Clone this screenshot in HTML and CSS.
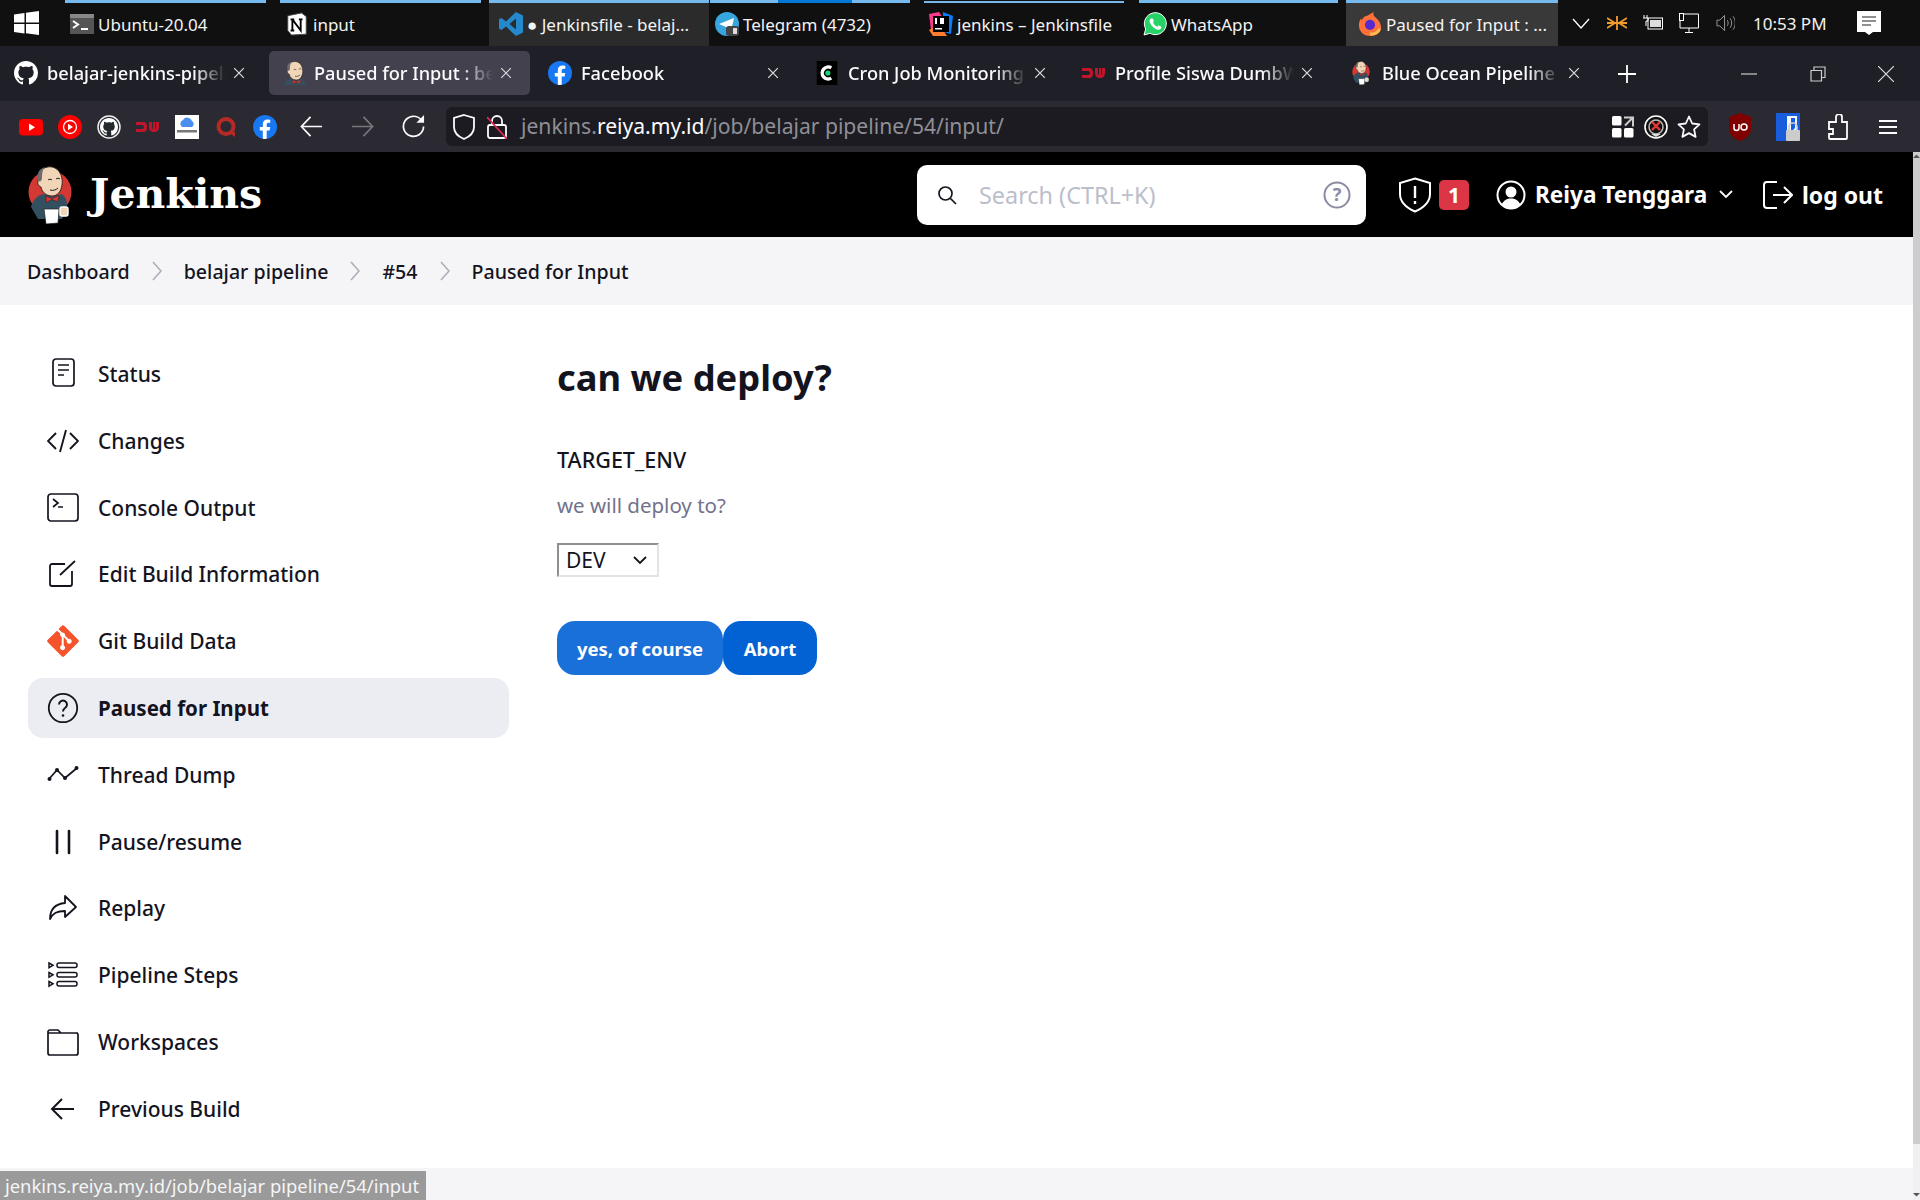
FILE: index.html
```html
<!DOCTYPE html>
<html lang="en">
<head>
<meta charset="utf-8">
<title>Paused for Input : belajar pipeline #54 [Jenkins]</title>
<link rel="stylesheet" href="styles.css">
</head>
<body>
<svg class="defs" width="0" height="0" aria-hidden="true">
  <defs>
    <g id="bfig">
      <path d="M3 41c2-8 7-12 13-13l8 3 9-3c4 2 6 6 6 11l-3 9-2 5H10z" fill="#335061"/>
      <path d="M12 6c2-4 9-7 15-4 6 3 8 11 7 17-1 7-5 11-10 11-6 0-10-4-11-9-2-1-4-3-3-6 0-2 1-2 2-1z" fill="#f0d6b7" stroke="#231f20" stroke-width=".9"/>
      <path d="M11 15C8 9 10 3 17 1c-3 3-3 8-3 12l-2 3z" fill="#6d6b6d"/>
      <path d="M20 14c1-1 3-1 4 0M28 13c1-1 3-1 4 0M22 24c3 1 6 0 8-2" fill="none" stroke="#231f20" stroke-width="1"/>
      <path d="M18 30l6 2.500 7-3-1 6.500-6-2.500-6 3z" fill="#d33833" stroke="#231f20" stroke-width=".5"/>
      <path d="M16 43h15l-1 14-12 1z" fill="#fff" stroke="#231f20" stroke-width=".7"/>
      <rect x="32" y="41" width="8" height="9" rx="2" fill="#f0d6b7" stroke="#fff" stroke-width="1.400"/>
    </g>
  </defs>
  <symbol id="butler" viewBox="0 0 44 58">
    <circle cx="22" cy="26" r="21.500" fill="#d33833"/>
    <use href="#bfig"/>
  </symbol>
  <symbol id="ghmark" viewBox="0 0 16 16">
    <path fill="currentColor" d="M8 0C3.58 0 0 3.58 0 8c0 3.54 2.29 6.53 5.47 7.59.4.07.55-.17.55-.38 0-.19-.01-.82-.01-1.49-2.01.37-2.53-.49-2.69-.94-.09-.23-.48-.94-.82-1.13-.28-.15-.68-.52-.01-.53.63-.01 1.08.58 1.23.82.72 1.21 1.87.87 2.33.66.07-.52.28-.87.51-1.07-1.78-.2-3.64-.89-3.64-3.95 0-.87.31-1.59.82-2.15-.08-.2-.36-1.02.08-2.12 0 0 .67-.21 2.2.82.64-.18 1.32-.27 2-.27s1.36.09 2 .27c1.53-1.04 2.2-.82 2.2-.82.44 1.1.16 1.92.08 2.12.51.56.82 1.27.82 2.15 0 3.07-1.87 3.75-3.65 3.95.29.25.54.73.54 1.48 0 1.07-.01 1.93-.01 2.2 0 .21.15.46.55.38A8 8 0 0 0 16 8c0-4.42-3.58-8-8-8z"/>
  </symbol>
  <symbol id="fb" viewBox="0 0 24 24">
    <circle cx="12" cy="12" r="12" fill="#1877f2"/>
    <path d="M16.600 15.400l.6-3.400h-3.500V9.700c0-1 .5-1.900 2-1.900h1.600V4.900s-1.400-.3-2.800-.3c-2.800 0-4.700 1.700-4.700 4.800V12H6.800v3.400h3v8.400a12 12 0 0 0 3.900 0v-8.400z" fill="#fff"/>
  </symbol>
  <symbol id="dw" viewBox="0 0 24 12">
    <path d="M0 1h7c3 0 4 2 4 5s-1 5-4 5H0V8h6c1 0 2-1 2-2s-1-2-2-2H0zM13 1h3v5c0 1 .5 2 1 2V1h2v7c.5 0 1-1 1-2V1h3v5c0 3-2 5-5 5s-5-2-5-5z" fill="#c0162c"/>
  </symbol>
  <symbol id="close" viewBox="0 0 16 16">
    <path d="M2.500 2.500l11 11M13.500 2.500l-11 11" stroke="currentColor" stroke-width="1.400" fill="none"/>
  </symbol>
  <symbol id="chev" viewBox="0 0 10 20">
    <path d="M1 1l8 9-8 9" fill="none" stroke="currentColor" stroke-width="1.600"/>
  </symbol>
</svg>

<div class="taskbar">
  <div class="start">
    <svg class="ic-win" viewBox="0 0 25 24"><path fill="#fff" d="M0 3.500l10.500-1.500v9.500H0zM12 1.800L25 0v11.500H12zM0 13h10.500v9.500L0 21zM12 13h13v11l-13-1.800z"/></svg>
  </div>
  <div class="task t-ubuntu">
    <svg class="ic-task" viewBox="0 0 24 20"><rect width="24" height="20" fill="#555"/><rect y="0" width="24" height="4" fill="#888"/><path d="M3 7l5 3.500-5 3.500" fill="none" stroke="#fff" stroke-width="2"/><path d="M11 15h7" stroke="#fff" stroke-width="2"/></svg>
    <span>Ubuntu-20.04</span>
  </div>
  <div class="task t-input">
    <svg class="ic-task" viewBox="0 0 24 26"><path d="M2 4l15-3 5 4v19l-16 1-4-5z" fill="#fff" stroke="#444"/><path d="M7 8v12M7 8l9 12V8M5 8h4M14 8h4M5 20h4" fill="none" stroke="#000" stroke-width="2"/></svg>
    <span>input</span>
  </div>
  <div class="task t-vs">
    <svg class="ic-task" viewBox="0 0 24 24"><path fill="#2489ca" d="M17 0l7 3.500v17L17 24 7 14.500 2.500 18 0 16.700V7.300L2.500 6 7 9.500zM17 6.500L10.500 12l6.500 5.500z"/></svg>
    <span>● Jenkinsfile - belaj...</span>
  </div>
  <div class="task t-tg">
    <svg class="ic-task" viewBox="0 0 24 24"><circle cx="12" cy="12" r="12" fill="#37a6de"/><path d="M4 12l15-6-3 13-5-4z" fill="#fff"/><rect x="11" y="14" width="13" height="10" rx="3" fill="#444"/><rect x="18" y="16" width="4" height="6" fill="#ddd"/></svg>
    <span>Telegram (4732)</span>
  </div>
  <div class="task t-ij">
    <svg class="ic-task" viewBox="0 0 24 24"><path d="M0 2l10-2 4 6-12 12z" fill="#fc3a8b"/><path d="M14 0l10 4-2 18-8-2z" fill="#087cfa"/><path d="M0 18l10-6 8 12H4z" fill="#fe7c2b"/><rect x="4" y="4" width="16" height="16" fill="#000"/><rect x="6" y="16" width="7" height="1.500" fill="#fff"/><rect x="6" y="6" width="2" height="6" fill="#fff"/><rect x="11" y="6" width="4" height="6" fill="#fff"/></svg>
    <span>jenkins – Jenkinsfile</span>
  </div>
  <div class="task t-wa">
    <svg class="ic-task" viewBox="0 0 24 24"><path d="M1 23l1.700-6A11 11 0 1 1 7 21.300z" fill="#25d366" stroke="#fff"/><path d="M8 6.500c-2 1-2 4 1 7.500s6.500 4.500 8.500 3c1-1 1-2 .5-2.500l-2.500-1.200-1.200 1.400c-2-.7-3.500-2.300-4.300-4.200L11 9 9.700 6.500z" fill="#fff"/></svg>
    <span>WhatsApp</span>
  </div>
  <div class="task t-ff">
    <svg class="ic-task" viewBox="0 0 24 26"><path d="M12 26C5 26 0 21 0 14c0-3 1-5 2-7l1 2c1-3 4-5 6-5l7-4c-1 3 0 4 2 6 4 3 6 7 6 11 0 5-5 9-12 9z" fill="#ff7139"/><path d="M22 18c0 4-5 6-10 6" fill="none" stroke="#ffbd4f" stroke-width="3"/><circle cx="12" cy="14" r="5.500" fill="#592acb"/></svg>
    <span>Paused for Input : ...</span>
  </div>
  <div class="tray">
    <svg class="tr-chev" viewBox="0 0 18 12"><path d="M1 1l8 9 8-9" fill="none" stroke="#fff" stroke-width="1.300"/></svg>
    <svg class="tr-net" viewBox="0 0 20 14"><path d="M0 2l8 5-8 5M20 2l-8 5 8 5M0 7h20M10 0v14" fill="none" stroke="#f39c2e" stroke-width="1.800"/></svg>
    <svg class="tr-bat" viewBox="0 0 20 16"><rect x="5" y="3" width="14.500" height="11" fill="none" stroke="#fff"/><rect x="7" y="5" width="11" height="7" fill="#ddd"/><path d="M1 0v3M4 0v3M0 3h5v3H3v5" stroke="#fff" fill="none"/></svg>
    <svg class="tr-mon" viewBox="0 0 20 20"><path d="M5 1h14.500v14H1V8M10 15v4M6 19.500h8" fill="none" stroke="#fff"/><rect x=".5" y=".5" width="4" height="7" fill="#101011" stroke="#fff"/></svg>
    <svg class="tr-vol" viewBox="0 0 20 18"><path d="M1 6h3l5-5v16l-5-5H1zM12 6c1 2 1 4 0 6M15 4c2 3 2 7 0 10M18 2c3 4 3 10 0 14" fill="none" stroke="#9a9a9a"/></svg>
    <span class="clock">10:53 PM</span>
    <svg class="tr-note" viewBox="0 0 24 24"><path d="M0 0h24v21h-8l-4 3-4-3H0z" fill="#fff"/><path d="M5 6h14M5 10h14M5 14h9" stroke="#222" stroke-width="1.200"/></svg>
  </div>
</div>

<div class="tabbar">
  <div class="tab">
    <svg class="ic-tab ic-gh"><use href="#ghmark"/></svg>
    <span class="tab-title">belajar-jenkins-pipeline</span>
    <svg class="ic-x"><use href="#close"/></svg>
  </div>
  <div class="tab tab-active">
    <svg class="ic-tab" viewBox="5 0 34 38"><use href="#bfig"/></svg>
    <span class="tab-title">Paused for Input : belajar</span>
    <svg class="ic-x"><use href="#close"/></svg>
  </div>
  <div class="tab">
    <svg class="ic-tab"><use href="#fb"/></svg>
    <span class="tab-title">Facebook</span>
    <svg class="ic-x"><use href="#close"/></svg>
  </div>
  <div class="tab">
    <svg class="ic-tab" viewBox="0 0 24 28"><rect width="24" height="28" fill="#000"/><path d="M17 8a7 7 0 1 0 0 12" fill="none" stroke="#fff" stroke-width="4"/><circle cx="13" cy="14" r="3" fill="#14d97a"/></svg>
    <span class="tab-title">Cron Job Monitoring</span>
    <svg class="ic-x"><use href="#close"/></svg>
  </div>
  <div class="tab">
    <svg class="ic-tab ic-dw"><use href="#dw"/></svg>
    <span class="tab-title">Profile Siswa DumbWays</span>
    <svg class="ic-x"><use href="#close"/></svg>
  </div>
  <div class="tab tab-ocean">
    <svg class="ic-tab ic-but"><use href="#butler"/></svg>
    <span class="tab-title">Blue Ocean Pipeline Editor</span>
    <svg class="ic-x"><use href="#close"/></svg>
  </div>
  <svg class="ic-plus" viewBox="0 0 18 18"><path d="M9 0v18M0 9h18" stroke="#fff" stroke-width="1.800"/></svg>
  <div class="winctl">
    <svg class="wc" viewBox="0 0 16 16"><path d="M0 8h16" stroke="#ccc" stroke-width="1.200"/></svg>
    <svg class="wc" viewBox="0 0 16 16"><path d="M1 4.500h10.500V15H1zM4 4.500V1h11v10.500h-3.500" fill="none" stroke="#ccc" stroke-width="1.200"/></svg>
    <svg class="wc" viewBox="0 0 16 16"><path d="M0 0l16 16M16 0L0 16" stroke="#ddd" stroke-width="1.200"/></svg>
  </div>
</div>

<div class="toolbar">
  <div class="bookmarks">
    <svg class="bm" viewBox="0 0 24 24"><rect y="4" width="24" height="16.500" rx="4" fill="#f00"/><path d="M10 8.500l6 3.800-6 3.700z" fill="#fff"/></svg>
    <svg class="bm" viewBox="0 0 24 24"><circle cx="12" cy="12" r="12" fill="#f00"/><circle cx="12" cy="12" r="6.500" fill="none" stroke="#fff" stroke-width="1.300"/><path d="M10 8.700l5 3.300-5 3.300z" fill="#fff"/></svg>
    <svg class="bm bm-gh" viewBox="0 0 24 24"><circle cx="12" cy="12" r="11" fill="#24292e" stroke="#eee" stroke-width="1.500"/><svg x="3" y="3" width="18" height="18"><use href="#ghmark"/></svg></svg>
    <svg class="bm" viewBox="0 0 24 12"><use href="#dw"/></svg>
    <svg class="bm" viewBox="0 0 24 24"><rect width="24" height="24" fill="#fff"/><path d="M7 12a4 4 0 0 1 1-7 5 5 0 0 1 9 1 3.500 3.500 0 0 1 0 6z" fill="#4a8ef0"/><rect x="2" y="15" width="20" height="2.500" fill="#777"/></svg>
    <svg class="bm" viewBox="0 0 24 24"><circle cx="12" cy="11.500" r="7.500" fill="none" stroke="#b52a26" stroke-width="4"/><path d="M14 17l7 5v-5z" fill="#b52a26"/></svg>
    <svg class="bm"><use href="#fb"/></svg>
  </div>
  <svg class="nav" viewBox="0 0 24 24"><path d="M23 12H2M11 2L1.500 12 11 22" fill="none" stroke="#fbfbfe" stroke-width="1.800"/></svg>
  <svg class="nav" viewBox="0 0 24 24"><path d="M1 12h21M13 2l9.500 10L13 22" fill="none" stroke="#77767c" stroke-width="1.800"/></svg>
  <svg class="nav" viewBox="0 0 24 24"><path d="M20 5A10.500 10.500 0 1 0 22.500 12" fill="none" stroke="#fbfbfe" stroke-width="1.800"/><path d="M23 0v8h-8z" fill="#fbfbfe"/></svg>
  <div class="urlbar">
    <svg class="ub-shield" viewBox="0 0 22 26"><path d="M11 1l10 3v9c0 6-5 10-10 12C6 23 1 19 1 13V4z" fill="none" stroke="#fbfbfe" stroke-width="1.800"/></svg>
    <svg class="ub-lock" viewBox="0 0 20 24"><rect x="1" y="10" width="18" height="13" rx="2" fill="none" stroke="#fbfbfe" stroke-width="1.800"/><path d="M5 10V6a5 5 0 0 1 10 0v4" fill="none" stroke="#fbfbfe" stroke-width="1.800"/><path d="M0 2l20 22" stroke="#e22850" stroke-width="1.800"/></svg>
    <span class="url"><span class="dim">jenkins.</span><span class="host">reiya.my.id</span><span class="dim">/job/belajar pipeline/54/input/</span></span>
    <svg class="ub-grid" viewBox="0 0 22 22"><rect width="9.500" height="9.500" rx="1.500" fill="#fff"/><rect y="12" width="9.500" height="9.500" rx="1.500" fill="#fff"/><rect x="12" y="12" width="9.500" height="9.500" rx="1.500" fill="#fff"/><path d="M12 1.500h9v9M21 1.500l-8 8" fill="none" stroke="#ccc" stroke-width="2"/></svg>
    <svg class="ub-globe" viewBox="0 0 24 24"><circle cx="12" cy="12" r="11" fill="#111" stroke="#fff" stroke-width="1.600"/><circle cx="12" cy="12" r="7" fill="none" stroke="#bbb" stroke-width="1.500"/><path d="M7 19h10l-5 3z" fill="#ddd"/><path d="M8 7l8 8M16 7l-8 8" stroke="#e53935" stroke-width="2.400"/></svg>
    <svg class="ub-star" viewBox="0 0 24 24"><path d="M12 1.500l3.200 7 7.300.9-5.400 5 1.500 7.500-6.600-3.800-6.600 3.800 1.500-7.500-5.400-5 7.300-.9z" fill="none" stroke="#fbfbfe" stroke-width="1.800" stroke-linejoin="round"/></svg>
  </div>
  <svg class="ext ext-ub" viewBox="0 0 22 28"><path d="M11 0l11 4v12c0 6-6 10-11 12C6 26 0 22 0 16V4z" fill="#800000"/><path d="M5 11v4a2.500 2.500 0 0 0 5 0v-4M12 14a3 3 0 1 0 6 0 3 3 0 1 0-6 0" fill="none" stroke="#fff" stroke-width="1.500"/></svg>
  <svg class="ext ext-bw" viewBox="0 0 24 28"><rect width="24" height="28" fill="#175ddc"/><path d="M11 3h10v12c0 4-5 7-5 7s-5-2-5-5z" fill="#fff" opacity=".95"/><path d="M15 5h4v10l-4 4z" fill="#175ddc"/><rect x="10" y="17" width="14" height="11" rx="1" fill="#ccc"/><path d="M13 17v-3a4 4 0 0 1 8 0v3" fill="none" stroke="#ccc" stroke-width="1.600"/></svg>
  <svg class="ext ext-pz" viewBox="0 0 20 26"><path d="M8 8V3a3 3 0 0 1 6 0v5h5v16a1 1 0 0 1-1 1H2a1 1 0 0 1-1-1v-4h4v-5H1V8z" fill="none" stroke="#fbfbfe" stroke-width="1.800"/></svg>
  <svg class="ext ext-mn" viewBox="0 0 18 16"><path d="M0 2h18M0 8h18M0 14h18" stroke="#fbfbfe" stroke-width="1.800"/></svg>
</div>

<div class="viewport">
  <div class="page">
    <header class="jh">
      <div class="brand">
        <svg class="ic-logo"><use href="#butler"/></svg>
        <span class="brand-name">Jenkins</span>
      </div>
      <div class="search">
        <svg class="s-icon" viewBox="0 0 20 20"><circle cx="8.500" cy="8.500" r="6.500" fill="none" stroke="#14141f" stroke-width="1.700"/><path d="M13.500 13.500l5.500 5.500" stroke="#14141f" stroke-width="1.700"/></svg>
        <span class="s-text">Search (CTRL+K)</span>
        <svg class="s-help" viewBox="0 0 28 28"><circle cx="14" cy="14" r="12.500" fill="none" stroke="#8b8ba3" stroke-width="2"/><text x="14" y="20" text-anchor="middle" class="s-q">?</text></svg>
      </div>
      <svg class="h-shield" viewBox="0 0 32 36"><path d="M16 1.500L31 6v11c0 8-7 14-15 17.500C8 31 1 25 1 17V6z" fill="none" stroke="#fff" stroke-width="2"/><path d="M16 9v12M16 24v3" stroke="#fff" stroke-width="2.400"/></svg>
      <span class="badge">1</span>
      <svg class="h-user" viewBox="0 0 30 30"><circle cx="15" cy="15" r="13.500" fill="none" stroke="#fff" stroke-width="2"/><circle cx="15" cy="12" r="5.500" fill="#fff"/><path d="M5.500 25c2-5 5.500-6.500 9.500-6.500s7.500 1.500 9.500 6.500a13.500 13.500 0 0 1-19 0z" fill="#fff"/></svg>
      <span class="h-name">Reiya Tenggara</span>
      <svg class="h-chev" viewBox="0 0 14 9"><path d="M1 1l6 6 6-6" fill="none" stroke="#fff" stroke-width="1.800"/></svg>
      <svg class="h-out" viewBox="0 0 30 28"><path d="M14 1H4a3 3 0 0 0-3 3v20a3 3 0 0 0 3 3h10M10 14h19M21 6l8 8-8 8" fill="none" stroke="#fff" stroke-width="2"/></svg>
      <span class="h-logout">log out</span>
    </header>
    <nav class="crumbs">
      <span>Dashboard</span><svg class="c-sep"><use href="#chev"/></svg>
      <span>belajar pipeline</span><svg class="c-sep"><use href="#chev"/></svg>
      <span>#54</span><svg class="c-sep"><use href="#chev"/></svg>
      <span>Paused for Input</span>
    </nav>
    <div class="content">
      <aside class="side">
        <a class="item"><svg class="i" viewBox="0 0 32 32"><rect x="6" y="1" width="21" height="27" rx="3" fill="none" stroke="currentColor" stroke-width="1.700"/><path d="M11 7h11M11 12h11M11 17h6" stroke="currentColor" stroke-width="1.700"/></svg><span>Status</span></a>
        <a class="item"><svg class="i" viewBox="0 0 32 32"><path d="M9 8L1 16l8 8M23 8l8 8-8 8M19 5l-6 22" fill="none" stroke="currentColor" stroke-width="1.900"/></svg><span>Changes</span></a>
        <a class="item"><svg class="i" viewBox="0 0 32 32"><rect x="1" y="2" width="30" height="27" rx="3" fill="none" stroke="currentColor" stroke-width="1.700"/><path d="M6 7l5 4-5 4M11 15h5" fill="none" stroke="currentColor" stroke-width="1.700"/></svg><span>Console Output</span></a>
        <a class="item"><svg class="i" viewBox="0 0 32 32"><path d="M18 6H5a2 2 0 0 0-2 2v18a2 2 0 0 0 2 2h18a2 2 0 0 0 2-2V13" fill="none" stroke="currentColor" stroke-width="1.800"/><path d="M13 17L28 3" stroke="currentColor" stroke-width="1.800"/></svg><span>Edit Build Information</span></a>
        <a class="item"><svg class="i" viewBox="0 0 32 32"><path fill="#f4532c" d="M31 14.500L17.500 1a2 2 0 0 0-3 0l-3 3 3.500 3.500a2.500 2.500 0 0 1 3 3l3.400 3.400a2.500 2.500 0 1 1-1.500 1.400l-3.200-3.200v8.300a2.500 2.500 0 1 1-2-.1v-8.400a2.500 2.500 0 0 1-1.300-3.200L10 5.700 1 14.500a2 2 0 0 0 0 3L14.500 31a2 2 0 0 0 3 0L31 17.500a2 2 0 0 0 0-3z"/></svg><span>Git Build Data</span></a>
        <a class="item item-active"><svg class="i" viewBox="0 0 32 32"><circle cx="16" cy="16" r="14.200" fill="none" stroke="currentColor" stroke-width="1.800"/><path d="M12 12.500a4 4 0 1 1 6 3.500c-1.500 1-2 1.700-2 3.500" fill="none" stroke="currentColor" stroke-width="2"/><circle cx="16" cy="23.500" r="1.300" fill="currentColor"/></svg><span>Paused for Input</span></a>
        <a class="item"><svg class="i" viewBox="0 0 32 32"><path d="M2 20l8-9 8 8 12-10" fill="none" stroke="currentColor" stroke-width="1.700"/><circle cx="2.500" cy="20" r="2" fill="currentColor"/><circle cx="10" cy="11" r="2" fill="currentColor"/><circle cx="18" cy="19" r="2" fill="currentColor"/><circle cx="29.500" cy="9" r="2" fill="currentColor"/></svg><span>Thread Dump</span></a>
        <a class="item"><svg class="i" viewBox="0 0 32 32"><path d="M10 5v22M22 5v22" stroke="currentColor" stroke-width="2.600" stroke-linecap="round"/></svg><span>Pause/resume</span></a>
        <a class="item"><svg class="i" viewBox="0 0 32 32"><path d="M18 4l11 11-11 10v-6c-8 0-12 2-15 8 0-9 5-15 15-16z" fill="none" stroke="currentColor" stroke-width="1.800" stroke-linejoin="round"/></svg><span>Replay</span></a>
        <a class="item"><svg class="i" viewBox="0 0 32 32"><g fill="none" stroke="currentColor" stroke-width="1.500"><rect x="10" y="4" width="20" height="4.500" rx="2"/><rect x="10" y="13.500" width="20" height="4.500" rx="2"/><rect x="10" y="22.500" width="20" height="4.500" rx="2"/><path d="M2 4l4 2.300-4 2.300zM2 13.500l4 2.300-4 2.300zM2 22.500l4 2.300-4 2.300z"/></g></svg><span>Pipeline Steps</span></a>
        <a class="item"><svg class="i" viewBox="0 0 32 32"><path d="M1 7V5.500A2 2 0 0 1 3 4h8l3 3h15a2 2 0 0 1 2 2v18a2 2 0 0 1-2 2H3a2 2 0 0 1-2-2V7h30" fill="none" stroke="currentColor" stroke-width="1.700"/></svg><span>Workspaces</span></a>
        <a class="item"><svg class="i" viewBox="0 0 32 32"><path d="M27 16H5M15 6L5 16l10 10" fill="none" stroke="currentColor" stroke-width="2"/></svg><span>Previous Build</span></a>
      </aside>
      <main class="main">
        <h1>can we deploy?</h1>
        <div class="f-name">TARGET_ENV</div>
        <div class="f-desc">we will deploy to?</div>
        <div class="select"><span>DEV</span><svg class="sel-chev" viewBox="0 0 14 9"><path d="M1 1l6 6 6-6" fill="none" stroke="#14141f" stroke-width="1.800"/></svg></div>
        <div class="btns">
          <button class="btn btn-yes">yes, of course</button>
          <button class="btn btn-abort">Abort</button>
        </div>
      </main>
    </div>
    <footer class="foot"></footer>
  </div>
  <div class="sbar">
    <div class="sb-thumb"><svg class="sb-up" viewBox="0 0 7 5"><path d="M0 4l3.500-3.500L7 4z" fill="#555"/></svg></div>
    <svg class="sb-down" viewBox="0 0 7 5"><path d="M0 1l3.500 3.500L7 1z" fill="#555"/></svg>
  </div>
</div>
<div class="status">jenkins.reiya.my.id/job/belajar pipeline/54/input</div>
</body>
</html>
```
FILE: styles.css
```css
* { box-sizing: border-box; }
html, body { margin: 0; padding: 0; }
body {
  width: 1920px; height: 1200px; overflow: hidden; position: relative;
  display: flex; flex-direction: column;
  font-family: "Noto Sans", "Open Sans", sans-serif; color: #14141f; background: #fff;
}
.defs { position: absolute; }
svg { display: block; flex: none; }

/* taskbar */
.taskbar { height: 46px; flex: none; display: flex; background: #101011; color: #f3f3f3; font-size: 17px; }
.start { width: 65px; padding: 11px 0 0 14px; }
.ic-win { width: 25px; height: 24px; }
.task {
  height: 46px; display: flex; align-items: center; gap: 4px; padding: 2px 0 0 5px; white-space: nowrap;
  background-image: linear-gradient(#76b9ed, #76b9ed); background-size: 100% 3px; background-repeat: no-repeat;
}
.ic-task { width: 24px; height: 24px; }
.t-ubuntu { width: 201px; margin-right: 14px; }
.t-input { width: 201px; margin-right: 8px; }
.t-vs { width: 220px; margin-right: 1px; padding-left: 10px; background-color: #2b2b2b; }
.t-tg { width: 200px; margin-right: 14px; background-image: linear-gradient(to right, #76b9ed 34%, #0078d7 34%, #0078d7 71%, #76b9ed 71%); }
.t-ij { width: 200px; margin-right: 15px; background-size: 100% 2px; background-position: 0 1px; }
.t-wa { width: 199px; margin-right: 8px; padding-left: 4px; }
.t-ff { width: 212px; padding-left: 12px; background-color: #393939; }
.tray { flex: 1; display: flex; align-items: center; padding-right: 38px; }
.tr-chev { width: 18px; height: 12px; margin: 2px 17px 0 14px; }
.tr-net { width: 20px; height: 14px; margin-right: 16px; }
.tr-bat { width: 20px; height: 16px; margin-right: 16px; }
.tr-mon { width: 20px; height: 20px; margin-right: 17px; }
.tr-vol { width: 19px; height: 18px; margin-right: 18px; }
.clock { width: 74px; margin-right: 30px; white-space: nowrap; font-size: 17px; }
.tr-note { width: 24px; height: 24px; }

/* tabs */
.tabbar { height: 55px; flex: none; display: flex; align-items: center; gap: 6px; padding-left: 2px; background: #1f1f27; color: #fbfbfe; font-size: 18.200px; font-weight: 500; }
.tab { width: 261px; height: 44px; margin-top: -1px; display: flex; align-items: center; padding: 0 17px 0 12px; border-radius: 5px; }
.tab-active { background: #42414d; padding-left: 14px; }
.tab-active .tab-title { margin-left: 7px; }
.tab-ocean { padding-left: 15px; }
.ic-tab { width: 24px; height: 24px; color: #fff; }
.ic-but { width: 18px; height: 24px; margin-right: 3px; }
.ic-dw { height: 12px; }
.tab-title {
  flex: 1; margin-left: 9px; overflow: hidden; white-space: nowrap;
  -webkit-mask-image: linear-gradient(to right, #000 82%, transparent 100%);
  mask-image: linear-gradient(to right, #000 82%, transparent 100%);
}
.ic-x { width: 14px; height: 14px; margin-left: 6px; color: #ddd; }
.ic-plus { width: 18px; height: 18px; margin-left: 14px; }
.winctl { flex: 1; display: flex; gap: 52.500px; padding-left: 99px; }
.wc { width: 16px; height: 16px; }

/* toolbar */
.toolbar { height: 51px; flex: none; display: flex; align-items: center; background: #2b2a33; padding-left: 19px; }
.bookmarks { display: flex; gap: 15px; margin-right: 23px; }
.bm { width: 24px; height: 24px; color: #fff; }
.nav { width: 23px; height: 23px; margin-right: 28px; }
.nav + .nav + .nav { margin-right: 21px; }
.urlbar { width: 1262px; height: 39px; border-radius: 6px; background: #1c1b22; display: flex; align-items: center; padding: 0 7px; margin-right: 21px; }
.ub-shield { width: 22px; height: 26px; }
.ub-lock { width: 20px; height: 24px; margin-left: 12px; }
.url { margin-left: 14px; margin-top: -2px; font-size: 21.100px; flex: 1; white-space: nowrap; }
.dim { color: #8f8f95; }
.host { color: #fbfbfe; }
.ub-grid { width: 22px; height: 22px; margin-right: 10px; }
.ub-globe { width: 24px; height: 24px; margin-right: 9px; }
.ub-star { width: 24px; height: 24px; }
.ext-ub { width: 22px; height: 28px; margin-right: 25px; }
.ext-bw { width: 24px; height: 28px; margin-right: 28px; }
.ext-pz { width: 20px; height: 26px; margin-right: 31px; }
.ext-mn { width: 18px; height: 16px; }

/* viewport */
.viewport { flex: 1; display: flex; min-height: 0; }
.page { flex: 1; display: flex; flex-direction: column; min-width: 0; }
.sbar { width: 7px; background: #f0f0f0; display: flex; flex-direction: column; justify-content: space-between; }
.sb-thumb { height: 992px; background: #cdcdcd; padding-top: 2px; }
.sb-up, .sb-down { width: 7px; height: 5px; }
.sb-down { margin-bottom: 3px; }

/* jenkins header */
.jh { height: 85px; flex: none; background: #000; color: #fff; display: flex; align-items: center; padding-left: 28px; font-size: 22px; font-weight: 700; }
.brand { display: flex; align-items: center; width: 889px; }
.ic-logo { width: 44px; height: 58px; }
.brand-name { margin-left: 18px; font-family: "DejaVu Serif", "Liberation Serif", serif; font-size: 41px; font-weight: 700; line-height: 1; }
.search { width: 449px; height: 60px; background: #fff; border-radius: 10px; display: flex; align-items: center; padding: 0 15px 0 20px; }
.s-icon { width: 20px; height: 20px; }
.s-text { flex: 1; margin-left: 22px; color: #bbbecb; font-size: 23.400px; font-weight: 400; white-space: nowrap; }
.s-help { width: 28px; height: 28px; }
.s-q { font-size: 18px; font-weight: 700; fill: #8b8ba3; }
.h-shield { width: 32px; height: 36px; margin-left: 33px; }
.badge { width: 30px; height: 30px; margin-left: 8px; background: #dc3545; border-radius: 5px; text-align: center; line-height: 30px; font-size: 21px; }
.h-user { width: 30px; height: 30px; margin-left: 27px; }
.h-name { margin-left: 9px; width: 173px; white-space: nowrap; font-size: 22.600px; }
.h-chev { width: 14px; height: 9px; margin-left: 11px; }
.h-out { width: 30px; height: 28px; margin-left: 30px; }
.h-logout { margin-left: 9px; font-size: 23px; white-space: nowrap; }

/* breadcrumbs */
.crumbs { height: 68px; flex: none; background: #f5f5f7; display: flex; align-items: center; padding-left: 27px; font-size: 19.600px; font-weight: 500; white-space: nowrap; }
.c-sep { width: 10px; height: 20px; margin: 0 22px; color: #aeaeba; }

/* body */
.content { flex: 1; display: flex; min-height: 0; }
.side { width: 557px; flex: none; padding: 39px 0 0 28px; display: flex; flex-direction: column; gap: 6.800px; }
.item { width: 481px; height: 60px; flex: none; display: flex; align-items: center; padding-left: 19px; border-radius: 15px; font-size: 21px; font-weight: 500; white-space: nowrap; }
.item-active { background: #ecedf3; font-weight: 700; font-size: 20.500px; }
.i { width: 32px; height: 32px; margin-right: 19px; }
.main { flex: 1; }
h1 { margin: 47px 0 0; font-size: 36.300px; line-height: 50px; font-weight: 700; white-space: nowrap; }
.f-name { margin-top: 43px; font-size: 21.500px; line-height: 30px; font-weight: 500; }
.f-desc { margin-top: 15px; font-size: 20.500px; line-height: 30px; color: #72728c; }
.select { margin-top: 23px; width: 102px; height: 34px; display: flex; align-items: center; justify-content: space-between; padding: 0 10px 0 7px; font-size: 21px; border: 2px solid; border-color: #8f8f8f #e3e3e3 #e3e3e3 #8f8f8f; }
.sel-chev { width: 14px; height: 9px; }
.btns { display: flex; margin-top: 44px; }
.btn { height: 54px; border: 0; border-radius: 18px; color: #fff; font: 700 18.500px "Noto Sans", sans-serif; padding: 0; white-space: nowrap; }
.btn-yes { width: 166px; background: #1a70d9; }
.btn-abort { width: 94px; background: #0362d3; }
.foot { height: 32px; flex: none; background: #f5f5f7; }
.status { position: absolute; left: 0; bottom: 0; width: 426px; height: 29px; background: #9a9a9a; color: #f5f5f5; font-size: 18.400px; line-height: 29px; padding-left: 5px; white-space: nowrap; }
```
